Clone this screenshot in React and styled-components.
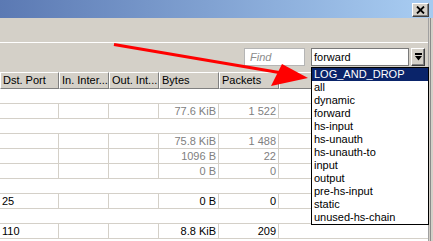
import React from 'react'
import styled, { createGlobalStyle } from 'styled-components'

const GlobalStyle = createGlobalStyle`
  html, body {
    margin: 0;
    padding: 0;
    background: #d4d0c8;
  }
  body {
    font-family: "Liberation Sans", Arial, sans-serif;
    font-size: 11px;
    color: #000;
  }
  * {
    box-sizing: border-box;
  }
`

const Window = styled.div`
  position: relative;
  width: 433px;
  height: 241px;
  overflow: hidden;
  background: #d4d0c8;
  display: flex;
  flex-direction: column;
`

const TitleBar = styled.div`
  height: 18px;
  flex: none;
  background: linear-gradient(to right, #5b79b3, #a6caf0 96%);
  display: flex;
  align-items: flex-start;
  justify-content: flex-end;
  padding: 3px 4px 0 0;
`

const CloseButton = styled.div`
  width: 17px;
  height: 14px;
  background: #d4d0c8;
  border-top: 1px solid #fff;
  border-left: 1px solid #fff;
  border-right: 1px solid #404040;
  border-bottom: 1px solid #404040;
  box-shadow: inset -1px -1px 0 #808080;
  display: flex;
  align-items: center;
  justify-content: center;
`

const Body = styled.div`
  flex: 1;
  display: flex;
  min-height: 0;
`

const Main = styled.div`
  width: 428px;
  flex: none;
  display: flex;
  flex-direction: column;
`

const Frame = styled.div`
  flex: 1;
  background: linear-gradient(to right, #a0a0a0 0 1px, #d4d0c8 1px 2px, #8a8a8a 2px 3px, #d4d0c8 3px);
`

const Toolbar = styled.div`
  height: 25px;
  flex: none;
  border-bottom: 1px solid #fff;
`

const FilterBar = styled.div`
  height: 29px;
  flex: none;
  display: flex;
  justify-content: flex-end;
  align-items: flex-start;
  padding: 5px 3px 0 0;
`

const FindBox = styled.div`
  width: 61px;
  height: 18px;
  margin-right: 6px;
  background: #fff;
  border: 1px solid #b5b5b5;
  color: #8c8c8c;
  font-style: italic;
  padding: 2px 0 0 5px;
`

const ComboBox = styled.div`
  width: 98px;
  height: 18px;
  background: #fff;
  border: 1px solid #7a7a7a;
  padding: 2px 0 0 2px;
`

const DropButton = styled.div`
  width: 14px;
  height: 18px;
  margin-left: 2px;
  background: #d4d0c8;
  border-top: 1px solid #fff;
  border-left: 1px solid #fff;
  border-right: 1px solid #404040;
  border-bottom: 1px solid #404040;
  box-shadow: inset -1px -1px 0 #808080;
  display: flex;
  align-items: center;
  justify-content: center;
`

const Table = styled.div`
  flex: 1;
  background: #fff;
  display: flex;
  flex-direction: column;
`

const COLS = '59px 50px 50px 60px 60px 1fr'

const HeaderRow = styled.div`
  height: 17px;
  flex: none;
  display: grid;
  grid-template-columns: ${COLS};
  background: #d4d0c8;
`

const HeaderCell = styled.div`
  border-top: 1px solid #fff;
  border-left: 1px solid #fff;
  border-right: 1px solid #808080;
  border-bottom: 1px solid #808080;
  padding: 1px 0 0 2px;
  white-space: nowrap;
  overflow: hidden;
`

const Row = styled.div`
  height: 15px;
  flex: none;
  display: grid;
  grid-template-columns: ${COLS};
  border-bottom: 1px solid #d4d0c8;
  color: ${p => (p.$dim ? '#808080' : '#000')};
`

const Cell = styled.div`
  border-right: ${p => (p.$blank ? 'none' : '1px solid #d4d0c8')};
  padding: 1px 2px 0 2px;
  text-align: ${p => (p.$right ? 'right' : 'left')};
  white-space: nowrap;
  overflow: hidden;
`

const DropList = styled.div`
  position: absolute;
  left: 311px;
  top: 67px;
  width: 118px;
  height: 158px;
  background: #fff;
  border: 1px solid #000;
  z-index: 2;
`

const Item = styled.div`
  height: 13px;
  line-height: 13px;
  padding-left: 2px;
  background: ${p => (p.$active ? '#0a246a' : 'transparent')};
  color: ${p => (p.$active ? '#fff' : '#000')};
  white-space: nowrap;
`

const Arrow = styled.svg`
  position: absolute;
  left: 0;
  top: 0;
  z-index: 3;
  pointer-events: none;
`

const rows = [
  null,
  { dim: true, cells: ['', '', '', '77.6 KiB', '1 522'] },
  null,
  { dim: true, cells: ['', '', '', '75.8 KiB', '1 488'] },
  { dim: true, cells: ['', '', '', '1096 B', '22'] },
  { dim: true, cells: ['', '', '', '0 B', '0'] },
  null,
  { cells: ['25', '', '', '0 B', '0'] },
  null,
  { cells: ['110', '', '', '8.8 KiB', '209'] },
]

const chains = [
  'LOG_AND_DROP', 'all', 'dynamic', 'forward', 'hs-input', 'hs-unauth',
  'hs-unauth-to', 'input', 'output', 'pre-hs-input', 'static', 'unused-hs-chain',
]

export default function App() {
  return (
    <Window>
      <GlobalStyle />
      <TitleBar>
        <CloseButton>
          <svg width="9" height="8" viewBox="0 0 9 8">
            <path d="M1 0.5 L8 7.5 M8 0.5 L1 7.5" stroke="#000" strokeWidth="1.8" />
          </svg>
        </CloseButton>
      </TitleBar>
      <Body>
        <Main>
          <Toolbar />
          <FilterBar>
            <FindBox>Find</FindBox>
            <ComboBox>forward</ComboBox>
            <DropButton>
              <svg width="7" height="8" viewBox="0 0 7 8">
                <rect x="0" y="0" width="7" height="2" fill="#000" />
                <path d="M0 3 H7 L3.5 7.5 Z" fill="#000" />
              </svg>
            </DropButton>
          </FilterBar>
          <Table>
            <HeaderRow>
              <HeaderCell>Dst. Port</HeaderCell>
              <HeaderCell>In. Inter...</HeaderCell>
              <HeaderCell>Out. Int...</HeaderCell>
              <HeaderCell>Bytes</HeaderCell>
              <HeaderCell>Packets</HeaderCell>
              <HeaderCell />
            </HeaderRow>
            {rows.map((r, i) =>
              r ? (
                <Row key={i} $dim={r.dim}>
                  <Cell>{r.cells[0]}</Cell>
                  <Cell>{r.cells[1]}</Cell>
                  <Cell>{r.cells[2]}</Cell>
                  <Cell $right>{r.cells[3]}</Cell>
                  <Cell $right>{r.cells[4]}</Cell>
                  <Cell $blank />
                </Row>
              ) : (
                <Row key={i} />
              )
            )}
          </Table>
        </Main>
        <Frame />
      </Body>

      <DropList>
        {chains.map((c, i) => (
          <Item key={c} $active={i === 0}>{c}</Item>
        ))}
      </DropList>

      <Arrow width="433" height="241" viewBox="0 0 433 241">
        <line x1="114" y1="44.5" x2="282" y2="73" stroke="#ff0000" strokeWidth="3.2" />
        <polygon points="282,64 271,86 308,78" fill="#ff0000" />
      </Arrow>
    </Window>
  )
}
